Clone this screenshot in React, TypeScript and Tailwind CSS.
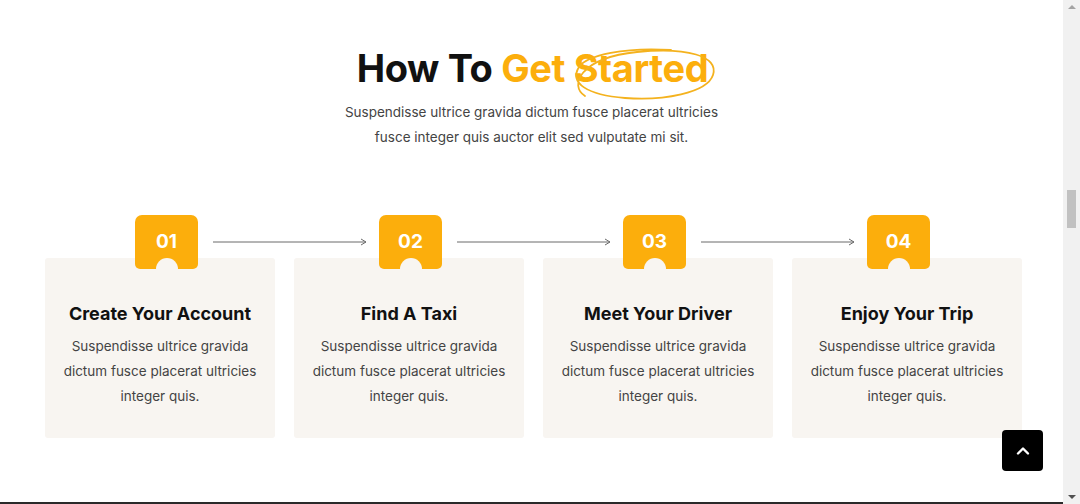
import React from "react";

const steps = [
  { num: "01", title: "Create Your Account" },
  { num: "02", title: "Find A Taxi" },
  { num: "03", title: "Meet Your Driver" },
  { num: "04", title: "Enjoy Your Trip" },
];

function Badge({ num }: { num: string }) {
  return (
    <div className="relative w-[63px] h-[54px] shrink-0 rounded-t-[7px] rounded-b-[5px] bg-[#fcae0c] flex items-center justify-center overflow-hidden">
      <span className="text-white text-[19px] font-bold leading-none -mt-[1px]">{num}</span>
      {/* notch */}
      <div className="absolute left-1/2 -translate-x-1/2 -bottom-[11px] w-[22px] h-[22px] rounded-full bg-[#f8f5f1]"></div>
    </div>
  );
}

function Arrow() {
  return (
    <svg width="154" height="8" viewBox="0 0 154 8" className="shrink-0 ml-[15px] mr-[12px]">
      <line x1="0" y1="4" x2="153" y2="4" stroke="#6b6b6b" strokeWidth="1" />
      <path d="M148 1 L153 4 L148 7" fill="none" stroke="#6b6b6b" strokeWidth="1" />
    </svg>
  );
}

export default function App() {
  return (
    <div
      className="relative flex w-[1080px] h-[504px] bg-white overflow-hidden"
      style={{ fontFamily: "Inter, 'Noto Sans', sans-serif" }}
    >
      <main className="w-[1063px] flex flex-col">
        {/* Heading */}
        <div className="flex flex-col items-center pt-[44px]">
          <h2 className="text-[38px] font-bold leading-[48px] tracking-[-0.4px] text-[#111] pl-[2px]">
            How To <span className="text-[#fcae0c]">Get </span>
            <span className="relative text-[#fcae0c]">
              Started
              <svg
                className="absolute -left-[9px] -top-[1px] pointer-events-none"
                width="158"
                height="62"
                viewBox="0 0 158 62"
                fill="none"
              >
                <path
                  d="M20 52 C 4 42, 14 14, 72 8 C 122 3, 154 12, 148 31 C 142 49, 98 57, 60 54 C 22 51, 4 39, 14 23 C 22 11, 60 3, 106 6"
                  stroke="#f4b21e"
                  strokeWidth="1.8"
                  strokeLinecap="round"
                />
              </svg>
            </span>
          </h2>
          <p className="mt-[8px] text-[13.5px] leading-[25px] text-[#444] text-center">
            Suspendisse ultrice gravida dictum fusce placerat ultricies
            <br />
            fusce integer quis auctor elit sed vulputate mi sit.
          </p>
        </div>

        {/* Steps */}
        <div className="ml-[45px] w-[977px] mt-[65px]">
          <div className="relative z-10 flex items-center pl-[90px] -mb-[11px]">
            {steps.map((s, i) => (
              <React.Fragment key={s.num}>
                <Badge num={s.num} />
                {i < steps.length - 1 && <Arrow />}
              </React.Fragment>
            ))}
          </div>
          <div className="grid grid-cols-4 gap-[19px]">
            {steps.map((s) => (
              <div
                key={s.num}
                className="h-[180px] rounded-[3px] bg-[#f8f5f1] flex flex-col items-center pt-[44px] text-center"
              >
                <h3 className="text-[18px] font-bold leading-[24px] text-[#111]">{s.title}</h3>
                <p className="mt-[8px] text-[13.5px] leading-[25px] text-[#444] px-[14px]">
                  Suspendisse ultrice gravida
                  <br />
                  dictum fusce placerat ultricies
                  <br />
                  integer quis.
                </p>
              </div>
            ))}
          </div>
        </div>
        <div className="flex-1"></div>
        <div className="h-[2px] bg-[#2a2a2a]"></div>
      </main>

      {/* Scrollbar */}
      <div className="w-[17px] h-full bg-[#f1f1f1] flex flex-col items-center">
        <div className="h-[14px] flex items-center justify-center">
          <div className="w-0 h-0 border-l-[4px] border-r-[4px] border-b-[4px] border-l-transparent border-r-transparent border-b-[#a3a3a3]"></div>
        </div>
        <div className="mt-[176px] w-[9px] h-[38px] bg-[#c1c1c1]"></div>
        <div className="flex-1"></div>
        <div className="h-[14px] flex items-center justify-center">
          <div className="w-0 h-0 border-l-[4px] border-r-[4px] border-t-[4px] border-l-transparent border-r-transparent border-t-[#505050]"></div>
        </div>
      </div>

      {/* Back to top */}
      <button className="absolute left-[1002px] top-[430px] w-[41px] h-[41px] rounded-[4px] bg-black flex items-center justify-center">
        <svg width="16" height="16" viewBox="0 0 16 16" fill="none">
          <path d="M3 10.5 L8 5.5 L13 10.5" stroke="white" strokeWidth="2.4" strokeLinecap="round" strokeLinejoin="round" />
        </svg>
      </button>
    </div>
  );
}
